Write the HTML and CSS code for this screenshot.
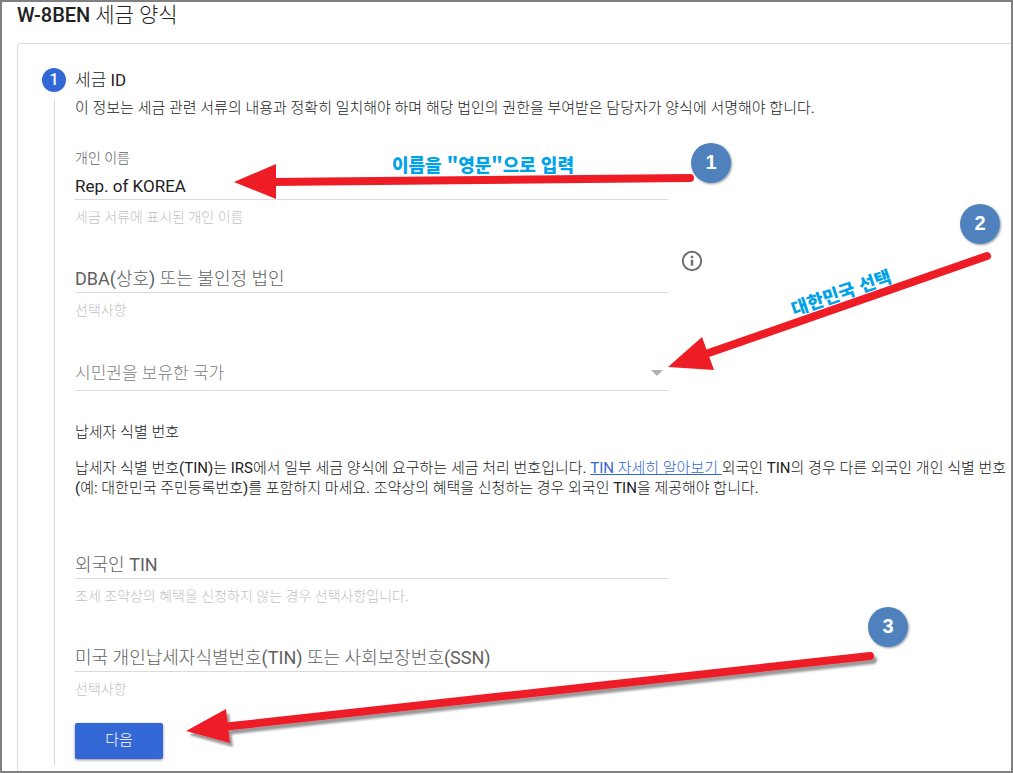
FILE: index.html
```html
<!DOCTYPE html>
<html lang="ko">
<head>
<meta charset="utf-8">
<title>W-8BEN 세금 양식</title>
<link rel="stylesheet" href="styles.css">
</head>
<body>
<main class="page">
  <h1 class="page-title">W-8BEN <span class="page-title-sub">세금 양식</span></h1>
  <form class="card">
    <div class="rail">
      <span class="step-number">1</span>
      <span class="rail-line"></span>
    </div>
    <div class="step">
      <h2 class="step-title">세금 ID</h2>
      <p class="text">이 정보는 세금 관련 서류의 내용과 정확히 일치해야 하며 해당 법인의 권한을 부여받은 담당자가 양식에 서명해야 합니다.</p>

      <div class="field field-first">
        <label class="label" for="name">개인 이름</label>
        <input class="input input-filled" id="name" type="text" value="Rep. of KOREA" aria-describedby="name-help">
        <p class="help" id="name-help">세금 서류에 표시된 개인 이름</p>
      </div>

      <div class="field-row">
        <div class="field field-low">
          <input class="input" type="text" placeholder="DBA(상호) 또는 불인정 법인" aria-label="DBA(상호) 또는 불인정 법인">
          <p class="help">선택사항</p>
        </div>
        <button class="info" type="button" aria-label="정보">
          <svg width="24" height="24" viewBox="0 0 24 24" fill="none" stroke="#6b6f74" stroke-width="2">
            <circle cx="12" cy="12" r="9.2"/>
            <path stroke-width="2.400" d="M12 10.800v6M12 6.800v2.400"/>
          </svg>
        </button>
      </div>

      <div class="field select-box">
        <select class="input select" aria-label="시민권을 보유한 국가">
          <option>시민권을 보유한 국가</option>
        </select>
        <svg class="caret" width="12" height="6" viewBox="0 0 12 6"><path d="M0 0h12L6 6z" fill="#b0b0b0"/></svg>
      </div>

      <h3 class="text section-title">납세자 식별 번호</h3>
      <p class="text">납세자 식별 번호(TIN)는 IRS에서 일부 세금 양식에 요구하는 세금 처리 번호입니다. <a class="link" href="#">TIN 자세히 알아보기 </a>외국인 TIN의 경우 다른 외국인 개인 식별 번호<br>(예: 대한민국 주민등록번호)를 포함하지 마세요. 조약상의 혜택을 신청하는 경우 외국인 TIN을 제공해야 합니다.</p>

      <div class="field field-tin">
        <input class="input" type="text" placeholder="외국인 TIN" aria-label="외국인 TIN">
        <p class="help">조세 조약상의 혜택을 신청하지 않는 경우 선택사항입니다.</p>
      </div>
      <div class="field field-ssn">
        <input class="input" type="text" placeholder="미국 개인납세자식별번호(TIN) 또는 사회보장번호(SSN)" aria-label="미국 개인납세자식별번호(TIN) 또는 사회보장번호(SSN)">
        <p class="help">선택사항</p>
      </div>
      <button class="next" type="button">다음</button>
    </div>
  </form>

  <svg class="notes" width="1013" height="773" viewBox="0 0 1013 773">
    <defs>
      <filter id="badge-shadow" x="-20%" y="-20%" width="150%" height="150%">
        <feDropShadow dx="1" dy="1" stdDeviation="1" flood-color="#000" flood-opacity=".4"/>
      </filter>
      <filter id="arrow-shadow" x="-5%" y="-20%" width="110%" height="150%">
        <feDropShadow dx="3" dy="4" stdDeviation="1" flood-color="#000" flood-opacity=".4"/>
      </filter>
    </defs>
    <g class="arrow">
      <path class="shaft" d="M270 182L690 178"/>
      <path d="M234 182L276 164V199z"/>
    </g>
    <g class="arrow">
      <path class="shaft" d="M700 356L987 256"/>
      <path d="M668 367L702 337L714 370z"/>
    </g>
    <g class="arrow" filter="url(#arrow-shadow)">
      <path class="shaft" d="M222 727L870 656"/>
      <path d="M186 731L226 709L230 743z"/>
    </g>
    <text class="note" x="392" y="172">이름을 "영문"으로 입력</text>
    <text class="note" transform="translate(794 316) rotate(-19)">대한민국 선택</text>
    <g class="badge">
      <circle cx="711" cy="163" r="20" filter="url(#badge-shadow)"/><text x="711" y="169">1</text>
      <circle cx="980" cy="224" r="20" filter="url(#badge-shadow)"/><text x="980" y="230">2</text>
      <circle cx="888" cy="627" r="20" filter="url(#badge-shadow)"/><text x="888" y="633">3</text>
    </g>
  </svg>
</main>
</body>
</html>
```
FILE: styles.css
```css
* { box-sizing: border-box; }
body {
  margin: 0;
  background: #fff;
  color: #212121;
  font-family: Roboto, "Noto Sans CJK KR Light", "Noto Sans CJK KR", sans-serif;
  font-size: 15px;
  line-height: 20px;
}
h1, h2, h3, p { margin: 0; font-weight: 400; }

.page {
  position: relative;
  display: flex;
  flex-direction: column;
  min-height: 100vh;
  border: 2px solid #808080;
  overflow: hidden;
}
.page-title {
  padding: 1px 15px 16px;
  font-size: 20px;
  line-height: 24px;
  font-weight: 500;
}
.page-title-sub { font-size: 21px; font-weight: 300; }

.card {
  flex: 1;
  display: flex;
  gap: 9px;
  margin-left: 15px;
  padding: 24px 0 6px 24px;
  border: solid #dadce0;
  border-width: 1px 0 0 1px;
  border-top-left-radius: 4px;
}
.rail {
  display: flex;
  flex-direction: column;
  align-items: center;
  gap: 8px;
  width: 24px;
}
.step-number {
  width: 24px;
  height: 24px;
  border-radius: 50%;
  background: #3367d6;
  color: #fff;
  font-size: 16px;
  line-height: 24px;
  font-weight: 500;
  text-align: center;
}
.rail-line { flex: 1; width: 1px; background: #dadada; }

.step { flex: 1; min-width: 0; padding-bottom: 6px; }
.step-title { padding-bottom: 6px; font-size: 17px; line-height: 24px; }
.text { font-size: 15px; line-height: 20px; }
.section-title { margin: 31px 0 16px; }
.link { color: #3367d6; text-decoration: underline; }

.field { width: 593px; max-width: 100%; }
.field-row { display: flex; align-items: flex-start; gap: 12px; margin-top: 23px; }
.field-first { margin-top: 32px; }
.field-low { padding-top: 16px; }
.field-tin { margin-top: 53px; }
.field-ssn { margin-top: 39px; }
.label { display: block; height: 22px; font-size: 14px; line-height: 16px; color: #616161; }
.input {
  display: block;
  width: 100%;
  height: 28px;
  padding: 0;
  border: 0;
  border-bottom: 1px solid #dadada;
  border-radius: 0;
  outline: 0;
  background: transparent;
  color: #212121;
  font-family: inherit;
  font-size: 18px;
  line-height: 24px;
}
.input-filled { font-size: 17px; }
.input::placeholder { color: #616161; opacity: 1; }
.help { margin-top: 8px; font-size: 14px; line-height: 18px; color: #c2c2c2; }
.select-box { display: grid; align-items: center; margin-top: 36px; }
.select { grid-area: 1 / 1; height: 36px; appearance: none; color: #808080; font-size: 17px; }
.caret { grid-area: 1 / 1; justify-self: end; margin-right: 5px; pointer-events: none; }
.info { display: block; width: 24px; height: 24px; padding: 0; border: 0; background: none; }
.info svg { display: block; }
.next {
  display: block;
  width: 88px;
  height: 36px;
  margin-top: 25px;
  padding: 0 0 3px;
  border: 0;
  border-radius: 2px;
  background: #3367d6;
  box-shadow: 0 1px 3px rgba(0, 0, 0, .45);
  color: #fff;
  font-family: inherit;
  font-size: 15px;
  line-height: 20px;
}

/* Guide arrows, captions and badges lie over the form. */
.notes { position: absolute; top: -2px; left: -2px; pointer-events: none; }
.arrow { fill: #ee1c25; }
.shaft { stroke: #ee1c25; stroke-width: 8; stroke-linecap: round; }
.note { fill: #00a2e8; font: 900 18px "Noto Sans CJK KR", sans-serif; }
.badge { fill: #4f81bd; }
.badge text { fill: #fff; font: 700 20px "Liberation Sans", sans-serif; text-anchor: middle; }
```
